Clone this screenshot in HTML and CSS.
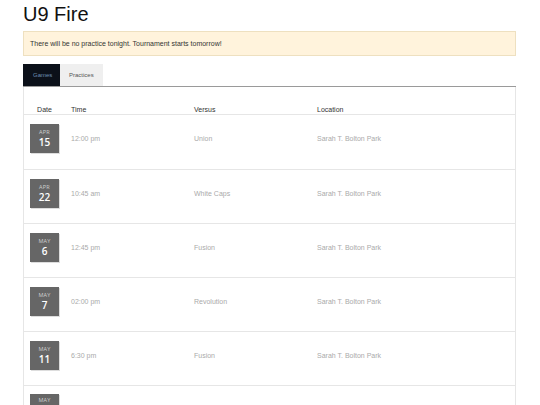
FILE: index.html
```html
<!DOCTYPE html>
<html>
<head>
<meta charset="utf-8">
<link rel="stylesheet" href="styles.css">
</head>
<body>
<div class="page">
  <h1 class="title">U9 Fire</h1>
  <div class="alert">There will be no practice tonight. Tournament starts tomorrow!</div>
  <div class="tabs">
    <div class="tab active">Games</div>
    <div class="tab">Practices</div>
  </div>
  <div class="panel">
    <div class="row head">
      <div class="c-date"><span class="head-date">Date</span></div>
      <div class="c-time">Time</div>
      <div class="c-vs">Versus</div>
      <div class="c-loc">Location</div>
    </div>
    <div class="row">
      <div class="c-date"><div class="badge"><span class="mon">APR</span><span class="day">15</span></div></div>
      <div class="c-time">12:00 pm</div>
      <div class="c-vs">Union</div>
      <div class="c-loc">Sarah T. Bolton Park</div>
    </div>
    <div class="row">
      <div class="c-date"><div class="badge"><span class="mon">APR</span><span class="day">22</span></div></div>
      <div class="c-time">10:45 am</div>
      <div class="c-vs">White Caps</div>
      <div class="c-loc">Sarah T. Bolton Park</div>
    </div>
    <div class="row">
      <div class="c-date"><div class="badge"><span class="mon">MAY</span><span class="day">6</span></div></div>
      <div class="c-time">12:45 pm</div>
      <div class="c-vs">Fusion</div>
      <div class="c-loc">Sarah T. Bolton Park</div>
    </div>
    <div class="row">
      <div class="c-date"><div class="badge"><span class="mon">MAY</span><span class="day">7</span></div></div>
      <div class="c-time">02:00 pm</div>
      <div class="c-vs">Revolution</div>
      <div class="c-loc">Sarah T. Bolton Park</div>
    </div>
    <div class="row">
      <div class="c-date"><div class="badge"><span class="mon">MAY</span><span class="day">11</span></div></div>
      <div class="c-time">6:30 pm</div>
      <div class="c-vs">Fusion</div>
      <div class="c-loc">Sarah T. Bolton Park</div>
    </div>
    <div class="row last">
      <div class="c-date"><div class="badge"><span class="mon">MAY</span></div></div>
    </div>
  </div>
</div>
</body>
</html>
```
FILE: styles.css
```css
html, body {
  margin: 0;
  padding: 0;
  background: #fff;
  overflow: hidden;
  height: 405px;
}
body {
  font-family: "Liberation Sans", Arial, sans-serif;
  color: #222;
}
.page {
  padding: 0 24px 0 23px;
}
.title {
  margin: 0;
  font-weight: normal;
  font-size: 20px;
  line-height: 23px;
  padding-top: 3px;
  color: #111;
}
.alert {
  margin-top: 5px;
  box-sizing: border-box;
  height: 25px;
  background: #fff3dc;
  border: 1px solid #eee0c0;
  font-size: 7px;
  line-height: 23px;
  padding-left: 6px;
  color: #333;
}
.tabs {
  margin-top: 8px;
  display: flex;
  border-bottom: 1px solid #9a9a9a;
}
.tab {
  height: 22px;
  line-height: 22px;
  font-size: 6px;
  padding: 0 9px;
  background: #efefef;
  color: #555;
}
.tab.active {
  background: #0b1019;
  color: #6d8fb5;
  width: 17px;
  padding: 0 10px;
}
.panel {
  border-left: 1px solid #e6e6e6;
  border-right: 1px solid #e6e6e6;
  padding-top: 19px;
}
.row {
  display: grid;
  grid-template-columns: 47px 123px 123px 1fr;
  height: 54px;
  padding: 9px 0 16px;
  align-items: center;
  border-top: 1px solid #e6e6e6;
  box-sizing: border-box;
  font-size: 7px;
  color: #aaa;
}
.row.head {
  height: 9px;
  padding: 0;
  border-top: none;
  border-bottom: 1px solid #e6e6e6;
  color: #333;
  align-items: start;
  line-height: 8px;
}
.row.head + .row {
  border-top: none;
}
.row.last {
  height: 20px;
  align-items: start;
  padding: 8px 0 0;
  overflow: hidden;
}
.head-date {
  display: block;
  width: 29px;
  margin-left: 6px;
  text-align: center;
}
.badge {
  margin-left: 6px;
  width: 29px;
  height: 29px;
  background: #666;
  box-shadow: 1px 1px 0 #ddd;
  display: flex;
  flex-direction: column;
  align-items: center;
  justify-content: center;
  font-family: "Open Sans", "Lato", sans-serif;
  color: #fff;
}
.row.last .badge {
  justify-content: flex-start;
  padding-top: 3px;
  box-sizing: border-box;
}
.mon {
  font-size: 5.5px;
  line-height: 7px;
  color: #d0d0d0;
  letter-spacing: 0.2px;
}
.day {
  font-size: 10px;
  line-height: 12px;
  font-weight: 600;
}
```
